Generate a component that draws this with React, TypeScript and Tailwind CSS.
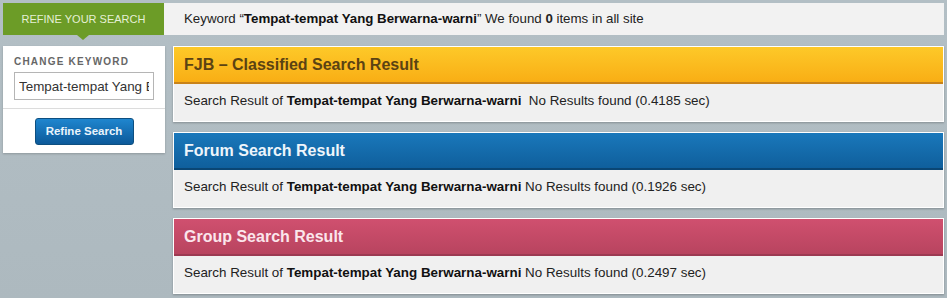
// Halaman hasil pencarian: tab "Refine your search" + tiga panel hasil.
const KATA_KUNCI = "Tempat-tempat Yang Berwarna-warni";

const PANEL = [
  {
    judul: "FJB – Classified Search Result",
    kepala: "bg-gradient-to-b from-[#fdc928] to-[#f9ae14] border-b-2 border-[#c98319] text-[#5b4313]",
    waktu: "0.4185",
    spasi: true,
  },
  {
    judul: "Forum Search Result",
    kepala: "bg-gradient-to-b from-[#1a78bb] to-[#0f5f9c] border-b-2 border-[#0a4674] text-[#eef5fb]",
    waktu: "0.1926",
  },
  {
    judul: "Group Search Result",
    kepala: "bg-gradient-to-b from-[#d0506f] to-[#b8445f] border-b-2 border-[#9c3a52] text-[#fbe6ec]",
    waktu: "0.2497",
  },
];

function PanelHasil({ judul, kepala, waktu, spasi }: { judul: string; kepala: string; waktu: string; spasi?: boolean }) {
  return (
    <div className="border border-white bg-[#f0f0f0] shadow-[0_1px_2px_rgba(0,0,0,0.25)]">
      <div className={`flex h-[37px] items-center px-[10px] text-[16px] font-bold ${kepala}`}>{judul}</div>
      <div className="flex h-[37px] items-center px-[10px] pb-[3px] text-[13.4px] text-[#222]">
        Search Result of&nbsp;<b className="text-[#111]">{KATA_KUNCI}</b>
        {spasi ? "\u00a0\u00a0" : "\u00a0"}No Results found ({waktu} sec)
      </div>
    </div>
  );
}

export default function App() {
  return (
    <div
      className="h-[298px] w-[947px] overflow-hidden bg-gradient-to-b from-[#b3bfc5] to-[#adb9bf] px-[3px] pt-[3px]"
      style={{ fontFamily: '"Liberation Sans", Arial, sans-serif' }}
    >
      <div className="flex h-[32px] w-[941px]">
        <div className="relative flex w-[161px] items-center justify-center bg-[#6c9c27] text-[11px] uppercase text-[#e6f0d6]">
          Refine your search
          <span className="absolute left-[74px] top-full h-0 w-0 border-x-[6px] border-t-[5px] border-x-transparent border-t-[#6c9c27]" />
        </div>
        <div className="flex flex-1 items-center bg-[#f2f2f2] pl-[20px] text-[13.3px] text-[#222]">
          Keyword “<b className="text-[#111]">{KATA_KUNCI}</b>” We found&nbsp;<b>0</b>&nbsp;items in all site
        </div>
      </div>

      <div className="mt-[11px] flex gap-[8px]">
        <div className="w-[162px] self-start bg-white shadow-[0_1px_2px_rgba(0,0,0,0.2)]">
          <div className="border-b border-[#dcdcdc] px-[11px] pb-[8px] pt-[10px]">
            <p className="text-[10px] leading-[12px] font-bold tracking-[1.2px] text-[#666]">CHANGE KEYWORD</p>
            <input
              readOnly
              value={KATA_KUNCI}
              className="mt-[4px] h-[28px] w-[140px] border border-[#b5b5b5] px-[4px] text-[13.4px] text-[#333] outline-none"
            />
          </div>
          <div className="flex justify-center pb-[8px] pt-[9px]">
            <button className="h-[27px] w-[99px] rounded-[3px] border border-[#0d4f80] bg-gradient-to-b from-[#1f86cf] to-[#0c5a9a] text-[11.5px] font-bold text-[#eaf4fb]">
              Refine Search
            </button>
          </div>
        </div>

        <div className="flex flex-1 flex-col gap-[10px]">
          {PANEL.map((p) => (
            <PanelHasil key={p.judul} {...p} />
          ))}
        </div>
      </div>
    </div>
  );
}
